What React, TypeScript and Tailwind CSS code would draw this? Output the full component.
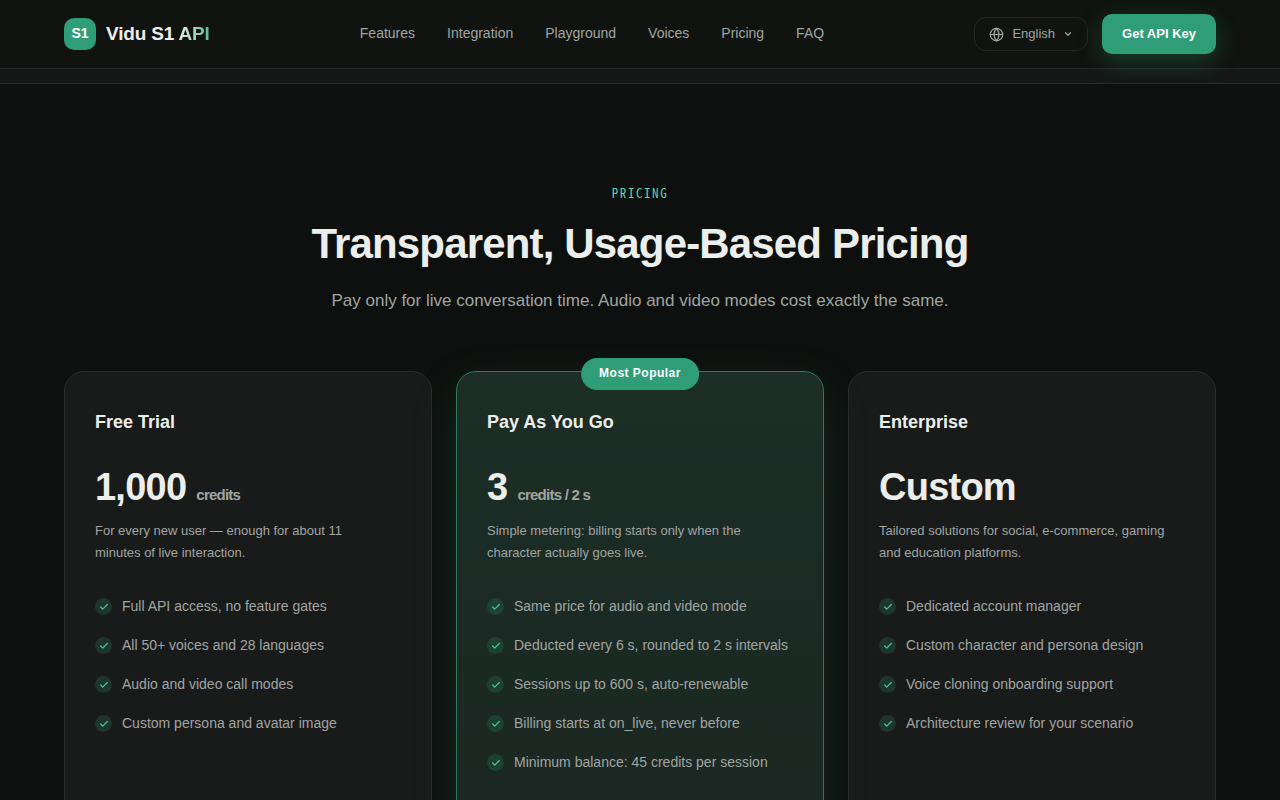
import { Check, ChevronDown } from "lucide-react";

const links = ["Features", "Integration", "Playground", "Voices", "Pricing", "FAQ"];

type Plan = {
  name: string;
  price: string;
  unit?: string;
  description: string;
  features: string[];
  popular?: boolean;
};

const plans: Plan[] = [
  {
    name: "Free Trial",
    price: "1,000",
    unit: "credits",
    description: "For every new user — enough for about 11 minutes of live interaction.",
    features: [
      "Full API access, no feature gates",
      "All 50+ voices and 28 languages",
      "Audio and video call modes",
      "Custom persona and avatar image",
    ],
  },
  {
    name: "Pay As You Go",
    price: "3",
    unit: "credits / 2 s",
    description: "Simple metering: billing starts only when the character actually goes live.",
    features: [
      "Same price for audio and video mode",
      "Deducted every 6 s, rounded to 2 s intervals",
      "Sessions up to 600 s, auto-renewable",
      "Billing starts at on_live, never before",
      "Minimum balance: 45 credits per session",
    ],
    popular: true,
  },
  {
    name: "Enterprise",
    price: "Custom",
    description: "Tailored solutions for social, e-commerce, gaming and education platforms.",
    features: [
      "Dedicated account manager",
      "Custom character and persona design",
      "Voice cloning onboarding support",
      "Architecture review for your scenario",
    ],
  },
];

function GlobeIcon() {
  return (
    <svg viewBox="0 0 24 24" fill="none" stroke="currentColor" strokeWidth="2" className="size-[15px]" aria-hidden="true">
      <circle cx="12" cy="12" r="10" />
      <path d="M2 12h20" />
      <path d="M12 2a15.3 15.3 0 0 1 4 10 15.3 15.3 0 0 1-4 10 15.3 15.3 0 0 1-4-10 15.3 15.3 0 0 1 4-10z" />
    </svg>
  );
}

function Header() {
  return (
    <header className="border-b border-[#232625] bg-[#101310]">
      <div className="mx-auto flex h-17 max-w-[1200px] items-center justify-between px-6">
        <a href="#top" className="flex items-center gap-2.5">
          <span className="flex size-8 items-center justify-center rounded-[10px] bg-[#2f9e78] pb-0.5 text-sm font-bold text-white">
            S1
          </span>
          <span className="text-[19px] font-bold tracking-[-0.01em] text-[#ebeeeb]">
            Vidu S1{" "}
            <span className="bg-linear-to-r from-[#ebeeeb] to-[#4fbb95] bg-clip-text text-transparent">API</span>
          </span>
        </a>
        <nav className="flex items-center gap-8 pb-0.5 text-sm text-[#a0a5a2]">
          {links.map((link) => (
            <a key={link} href={`#${link.toLowerCase()}`}>
              {link}
            </a>
          ))}
        </nav>
        <div className="flex items-center gap-3.5">
          <button
            type="button"
            className="flex h-8.5 items-center gap-2 rounded-xl border border-[#232625] px-3.5 text-[13px] text-[#a0a5a2]"
          >
            <GlobeIcon />
            English
            <ChevronDown className="size-2.5" strokeWidth={3} />
          </button>
          <a
            href="#key"
            className="flex h-10 items-center rounded-[10px] bg-[#2f9e78] px-5 text-[13px] font-bold text-white shadow-[0_8px_24px_rgba(47,158,120,0.3)]"
          >
            Get API Key
          </a>
        </div>
      </div>
    </header>
  );
}

function PlanCard({ plan }: { plan: Plan }) {
  return (
    <article
      className={
        plan.popular
          ? "relative min-h-[520px] rounded-[20px] border border-[#2f7a60] bg-linear-to-b from-[#1c2e27] to-[#1b2621] px-7.5 pt-9 pb-10 shadow-[0_16px_48px_rgba(47,158,120,0.16)]"
          : "min-h-[520px] rounded-[20px] border border-[#2a2d2b] bg-[#191b1a] px-7.5 pt-9 pb-10"
      }
    >
      {plan.popular && (
        <span className="absolute -top-3.5 left-1/2 flex h-8 -translate-x-1/2 items-center rounded-full bg-[#2f9e78] px-4.5 pb-0.5 text-xs font-bold tracking-[0.04em] whitespace-nowrap text-white">
          Most Popular
        </span>
      )}
      <h3 className="text-lg font-bold text-[#ebeeeb]">{plan.name}</h3>
      <p className="mt-7 flex items-baseline gap-2.5 text-[38px] leading-[46px] font-bold tracking-[-0.02em] text-[#ebeeeb]">
        {plan.price}
        {plan.unit && <span className="text-[15px] leading-5 text-[#a0a5a2]">{plan.unit}</span>}
      </p>
      <p className="mt-2.5 max-w-72 text-[13px] leading-[22px] text-[#a0a5a2]">{plan.description}</p>
      <ul className="mt-[31px] flex flex-col gap-4">
        {plan.features.map((feature) => (
          <li key={feature} className="flex items-center gap-2.5 text-sm leading-[23px] text-[#a0a5a2]">
            <span className="flex size-[17px] items-center justify-center rounded-full bg-[#2f9e78]/20 text-[#43c796]">
              <Check className="size-2.5" strokeWidth={3} />
            </span>
            {feature}
          </li>
        ))}
      </ul>
    </article>
  );
}

export default function App() {
  return (
    <div id="top" className="min-h-screen bg-[#0d100e] font-['Liberation_Sans',Arial,sans-serif]">
      <Header />
      <div className="h-[15px] border-b border-[#2a2d2b] bg-[#151817]" />
      <main id="pricing" className="mx-auto max-w-[1200px] px-6 pt-[99px]">
        <div className="text-center">
          <p className="font-['Noto_Sans_Mono_CJK_SC','Noto_Sans_Mono_CJK_JP',monospace] text-[13px] leading-5 tracking-[0.12em] text-[#62cfa5] uppercase">
            Pricing
          </p>
          <h2 className="mt-4 text-[42px] leading-[50px] font-bold tracking-[-0.02em] text-[#ebeeeb]">
            Transparent, Usage-Based Pricing
          </h2>
          <p className="mt-4.5 text-[17px] leading-7 text-[#a0a5a2]">
            Pay only for live conversation time. Audio and video modes cost exactly the same.
          </p>
        </div>
        <div className="mt-14 grid grid-cols-3 gap-6">
          {plans.map((plan) => (
            <PlanCard key={plan.name} plan={plan} />
          ))}
        </div>
      </main>
    </div>
  );
}
